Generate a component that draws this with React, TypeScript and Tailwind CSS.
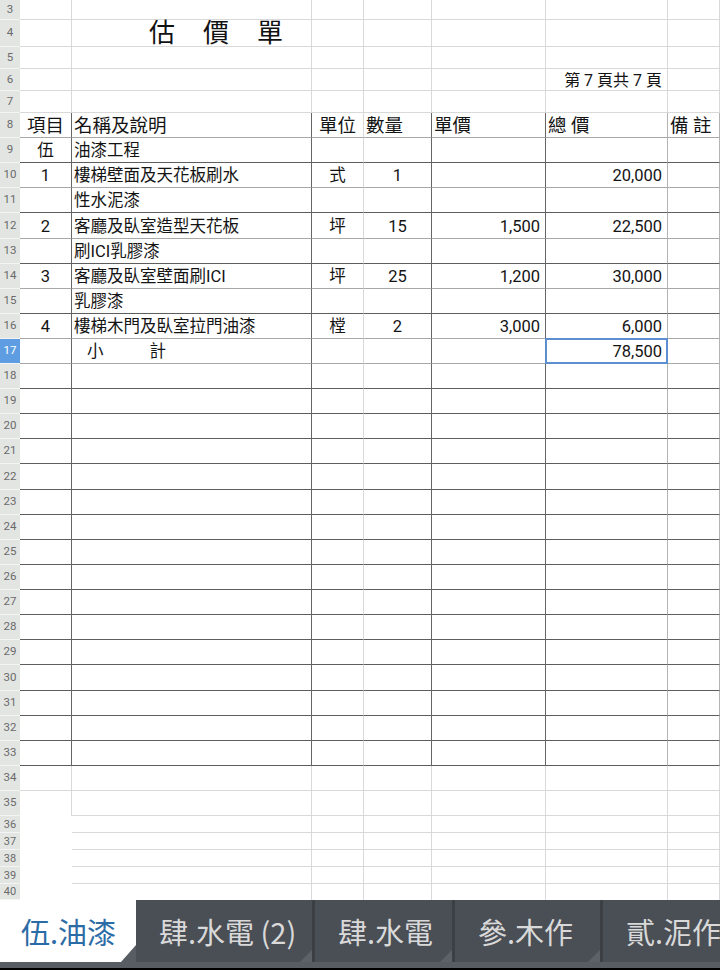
import React from "react";

const W = ["w-[52px]", "w-[240px]", "w-[52px]", "w-[68px]", "w-[114px]", "w-[122px]", "w-[52px]"];

const rL = "border-r border-r-[#d9d9d9]";
const rM = "border-r border-r-[#b3b3b3]";
const rD = "border-r border-r-[#666666]";
const bL = "border-b border-b-[#d9d9d9]";
const bM = "border-b border-b-[#a8a8a8]";
const bD = "border-b border-b-[#5e5e5e]";

const topV = [rL, rL, rL, rL, rL, rL, rL];
const tabV = [rD, rD, rL, rD, rD, rM, rM];
const botV = ["", rL, rL, rL, rL, rL, rL];

const all = (c: string) => [c, c, c, c, c, c, c];

type Cell = { t?: React.ReactNode; a?: "c" | "l" | "r" };

type Row = {
  n: number;
  h: string;
  v: string[];
  b: string[];
  cells?: (Cell | null)[];
  small?: boolean;
  sel?: boolean;
  head?: boolean;
};

const c = (t: React.ReactNode): Cell => ({ t, a: "c" });
const l = (t: React.ReactNode): Cell => ({ t, a: "l" });
const r = (t: React.ReactNode): Cell => ({ t, a: "r" });

const title = (
  <div className="flex gap-[28px] pl-[75px] text-[26px] leading-none text-[#111]">
    <span>估</span>
    <span>價</span>
    <span>單</span>
  </div>
);

const subtotal = (
  <div className="flex gap-[46px] pl-[13px]">
    <span>小</span>
    <span>計</span>
  </div>
);

const rows: Row[] = [
  { n: 3, h: "h-[20px]", v: topV, b: all(bL) },
  { n: 4, h: "h-[27px]", v: topV, b: all(bL), cells: [null, { t: title, a: "l" }] },
  { n: 5, h: "h-[22px]", v: topV, b: all(bL) },
  {
    n: 6,
    h: "h-[22px]",
    v: topV,
    b: all(bL),
    cells: [null, null, null, null, null, { t: <span className="pt-[2px] text-[16px]">第 7 頁共 7 頁</span>, a: "r" }],
  },
  { n: 7, h: "h-[22px]", v: topV, b: all(bL) },
  {
    n: 8,
    h: "h-[25px]",
    v: tabV,
    b: all(bM),
    head: true,
    cells: [c("項目"), l("名稱及說明"), c("單位"), l("數量"), l("單價"), l("總 價"), l("備 註")],
  },
  { n: 9, h: "h-[25px]", v: tabV, b: all(bD), cells: [c("伍"), l("油漆工程")] },
  {
    n: 10,
    h: "h-[25px]",
    v: tabV,
    b: all(bM),
    cells: [c("1"), l("樓梯壁面及天花板刷水"), c("式"), c("1"), null, r("20,000")],
  },
  { n: 11, h: "h-[25px]", v: tabV, b: all(bD), cells: [null, l("性水泥漆")] },
  {
    n: 12,
    h: "h-[26px]",
    v: tabV,
    b: all(bM),
    cells: [c("2"), l("客廳及臥室造型天花板"), c("坪"), c("15"), r("1,500"), r("22,500")],
  },
  { n: 13, h: "h-[25px]", v: tabV, b: all(bD), cells: [null, l("刷ICI乳膠漆")] },
  {
    n: 14,
    h: "h-[25px]",
    v: tabV,
    b: all(bM),
    cells: [c("3"), l("客廳及臥室壁面刷ICI"), c("坪"), c("25"), r("1,200"), r("30,000")],
  },
  { n: 15, h: "h-[25px]", v: tabV, b: all(bD), cells: [null, l("乳膠漆")] },
  {
    n: 16,
    h: "h-[25px]",
    v: tabV,
    b: all(bM),
    cells: [c("4"), l("樓梯木門及臥室拉門油漆"), c("樘"), c("2"), r("3,000"), r("6,000")],
  },
  {
    n: 17,
    h: "h-[25px]",
    v: tabV,
    b: all(bM),
    sel: true,
    cells: [null, { t: subtotal, a: "l" }, null, null, null, r("78,500")],
  },
  { n: 18, h: "h-[25px]", v: tabV, b: all(bD) },
  { n: 19, h: "h-[25px]", v: tabV, b: all(bD) },
  { n: 20, h: "h-[25px]", v: tabV, b: all(bD) },
  { n: 21, h: "h-[25px]", v: tabV, b: all(bD) },
  { n: 22, h: "h-[26px]", v: tabV, b: all(bD) },
  { n: 23, h: "h-[25px]", v: tabV, b: all(bD) },
  { n: 24, h: "h-[25px]", v: tabV, b: all(bD) },
  { n: 25, h: "h-[25px]", v: tabV, b: all(bD) },
  { n: 26, h: "h-[25px]", v: tabV, b: all(bD) },
  { n: 27, h: "h-[25px]", v: tabV, b: all(bD) },
  { n: 28, h: "h-[25px]", v: tabV, b: all(bD) },
  { n: 29, h: "h-[25px]", v: tabV, b: all(bD) },
  { n: 30, h: "h-[26px]", v: tabV, b: all(bD) },
  { n: 31, h: "h-[25px]", v: tabV, b: all(bD) },
  { n: 32, h: "h-[25px]", v: tabV, b: all(bD) },
  { n: 33, h: "h-[25px]", v: tabV, b: all(bD) },
  { n: 34, h: "h-[25px]", v: topV, b: all(bL) },
  { n: 35, h: "h-[25px]", v: topV, b: ["", bL, bL, bL, bL, bL, bL] },
  { n: 36, h: "h-[17px]", v: botV, b: ["", bL, bL, bL, bL, bL, bL], small: true },
  { n: 37, h: "h-[17px]", v: botV, b: ["", bL, bL, bL, bL, bL, bL], small: true },
  { n: 38, h: "h-[17px]", v: botV, b: ["", bL, bL, bL, bL, bL, bL], small: true },
  { n: 39, h: "h-[17px]", v: botV, b: ["", bL, bL, bL, bL, bL, bL], small: true },
  { n: 40, h: "h-[16px]", v: botV, b: ["", "", "", "", "", "", ""], small: true },
];

function SheetRow({ row }: { row: Row }) {
  return (
    <div className={`flex ${row.h}`}>
      <div
        className={`flex w-[20px] shrink-0 items-center justify-center border-b border-b-[#f4f4f4] leading-none ${
          row.small ? "text-[11px]" : "text-[11.5px]"
        } ${row.sel ? "bg-[#5e9de2] text-white" : "bg-[#e3e5e3] text-[#6a6a6a]"}`}
      >
        {row.n}
      </div>
      {W.map((w, i) => {
        const cell = row.cells ? row.cells[i] : null;
        const align =
          cell?.a === "c" ? "justify-center" : cell?.a === "r" ? "justify-end pr-[5px]" : "justify-start pl-[2px]";
        const selected = row.sel && i === 5;
        return (
          <div
            key={i}
            className={`relative flex shrink-0 items-center overflow-visible whitespace-nowrap ${w} ${row.v[i]} ${row.b[i]} ${align} ${
              row.head ? "text-[18.5px]" : "text-[16.5px]"
            } ${row.n >= 8 ? "pt-[3px]" : ""} leading-none text-[#141414]`}
          >
            {cell?.t}
            {selected && <div className="pointer-events-none absolute inset-[-1px] border-2 border-[#5b8fcf]" />}
          </div>
        );
      })}
    </div>
  );
}

const tabs = [
  { label: "肆.水電 (2)", w: "w-[176px]" },
  { label: "肆.水電", w: "w-[137px]" },
  { label: "參.木作", w: "w-[145px]" },
  { label: "貳.泥作", w: "w-[140px]" },
];

export default function App() {
  return (
    <div className="h-[970px] w-[720px] overflow-hidden bg-white font-[Roboto,'Noto_Sans_CJK_TC',sans-serif]">
      <div className="h-[900px] overflow-hidden">
        {rows.map((row) => (
          <SheetRow key={row.n} row={row} />
        ))}
      </div>
      <div className="flex h-[68px] flex-col bg-[#585d63] font-['Noto_Sans_CJK_TC',sans-serif]">
        <div className="flex h-[62px] bg-[#3c4045]">
          <div className="relative h-full w-[136px] shrink-0 bg-[#585d63]">
            <div className="absolute inset-0 bg-white [clip-path:polygon(0_0,100%_0,100%_calc(100%-17px),calc(100%-15px)_100%,0_100%)]" />
            <span className="relative flex h-full items-center pl-[21px] text-[29px] leading-none text-[#2c6ca6]">
              伍.油漆
            </span>
          </div>
          {tabs.map((t, i) => (
            <div key={i} className={`relative h-full shrink-0 ${t.w} ${i > 0 ? "ml-[3px]" : ""} bg-[#5d6268]`}>
              <div className="absolute inset-0 bg-[#4a4e55] [clip-path:polygon(0_0,100%_0,100%_calc(100%-12px),calc(100%-12px)_100%,0_100%)]" />
              <span className="relative flex h-full items-center whitespace-nowrap pl-[23px] text-[29px] leading-none text-[#d9d9d9]">
                {t.label}
              </span>
            </div>
          ))}
        </div>
      </div>
      <div className="h-[2px] bg-black" />
    </div>
  );
}
